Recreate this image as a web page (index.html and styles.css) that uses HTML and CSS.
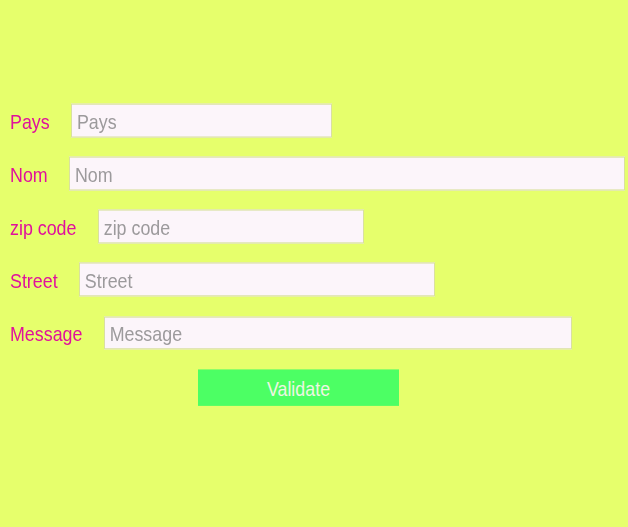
FILE: index.html
```html
<!DOCTYPE html>
<html lang="fr">
<head>
<meta charset="utf-8">
<title>Formulaire</title>
<link rel="stylesheet" href="styles.css">
</head>
<body>
<form class="form">
  <div class="row"><label class="label" for="pays">Pays</label><input class="field w-pays" id="pays" type="text" placeholder="Pays"></div>
  <div class="row"><label class="label" for="nom">Nom</label><input class="field w-nom" id="nom" type="text" placeholder="Nom"></div>
  <div class="row"><label class="label" for="zip">zip code</label><input class="field w-zip" id="zip" type="text" placeholder="zip code"></div>
  <div class="row"><label class="label" for="street">Street</label><input class="field w-street" id="street" type="text" placeholder="Street"></div>
  <div class="row"><label class="label" for="msg">Message</label><input class="field w-msg" id="msg" type="text" placeholder="Message"></div>
  <div class="actions"><button class="btn" type="submit">Validate</button></div>
</form>
</body>
</html>
```
FILE: styles.css
```css
html, body {
  margin: 0;
  padding: 0;
  background: #e6ff6c;
  height: 100%;
  overflow: hidden;
}
body {
  font-family: "Liberation Sans", Arial, sans-serif;
  font-size: 17.85px;
}
/* the reference uses a tall, narrow sans face; emulate it with a vertical stretch */
.form {
  padding: 88.4px 0 0 10px;
  display: flex;
  flex-direction: column;
  gap: 16.15px;
  transform: scaleY(1.1765);
  transform-origin: 0 0;
}
.row {
  display: flex;
  align-items: center;
  gap: 21.25px;
  height: 28.9px;
}
.label {
  color: #e0119c;
  flex-shrink: 0;
  padding-top: 3.5px;
}
.field {
  flex-shrink: 0;
  box-sizing: border-box;
  height: 28.9px;
  margin: 0;
  padding: 3.4px 5px 0;
  border: 1px solid #d9e0a0;
  background: #fcf5fa;
  font-family: inherit;
  font-size: 17.85px;
  color: #333;
  outline: none;
}
.field::placeholder {
  color: #9c9a9c;
}
.w-pays { width: 261px; }
.w-nom { width: 556px; }
.w-zip { width: 266px; }
.w-street { width: 356px; }
.w-msg { width: 468px; }
.actions {
  display: flex;
  padding-left: 188px;
}
.btn {
  width: 201px;
  height: 31.45px;
  border: none;
  background: #4cff64;
  color: #eef6e2;
  font-family: inherit;
  font-size: 17.85px;
  padding: 4.2px 0 0;
}
```
